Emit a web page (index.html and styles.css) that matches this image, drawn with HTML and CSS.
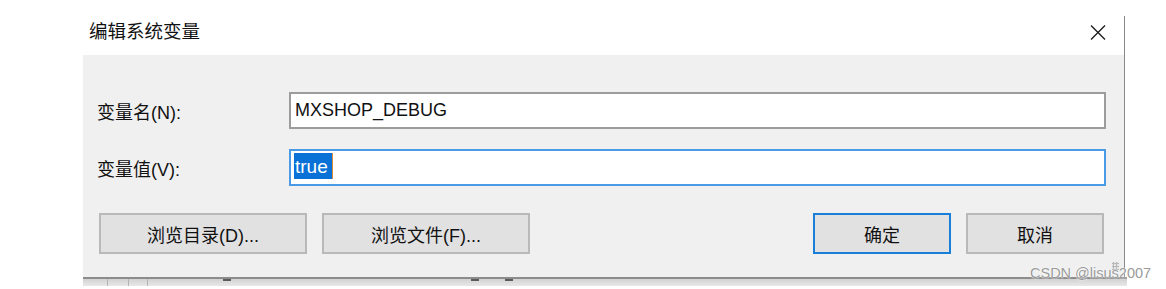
FILE: index.html
```html
<!DOCTYPE html>
<html lang="zh-CN">
<head>
    <meta charset="UTF-8">
    <title>编辑系统变量</title>
    <link rel="stylesheet" href="styles.css">
</head>
<body>
    <div class="screen">
        <!-- 对话框 -->
        <div class="dialog">
            <div class="titlebar">
                <span class="title">编辑系统变量</span>
                <span class="close-btn">
                    <svg width="16" height="15" viewBox="0 0 16 15">
                        <path d="M1 0.5 L15 14.5 M15 0.5 L1 14.5" stroke="#1a1a1a" stroke-width="1.3" fill="none"/>
                    </svg>
                </span>
            </div>

            <div class="panel">
                <div class="field-row">
                    <span class="field-label">变量名(N):</span>
                    <div class="textbox">MXSHOP_DEBUG</div>
                </div>
                <div class="field-row">
                    <span class="field-label">变量值(V):</span>
                    <div class="textbox focused"><span class="selected">true</span><span class="caret"></span></div>
                </div>

                <div class="button-row">
                    <div class="button-group">
                        <button class="btn wide">浏览目录(D)...</button>
                        <button class="btn wide">浏览文件(F)...</button>
                    </div>
                    <div class="button-group">
                        <button class="btn default">确定</button>
                        <button class="btn">取消</button>
                    </div>
                </div>
            </div>
        </div>

        <!-- 后面窗口露出的一条 -->
        <div class="backdrop-strip">
            <span class="tick" style="margin-left: 24px"></span>
            <span class="tick" style="margin-left: 20px"></span>
            <span class="tick" style="margin-left: 18px"></span>
            <span class="tick dark" style="margin-left: 75px"></span>
            <span class="tick dark" style="margin-left: 240px"></span>
            <span class="tick dark" style="margin-left: 26px"></span>
        </div>

        <div class="grip"></div>
        <div class="watermark">CSDN @lisus2007</div>
    </div>
</body>
</html>
```

FILE: styles.css
```css
* {
    margin: 0;
    padding: 0;
    box-sizing: border-box;
}

body {
    background-color: #fff;
    font-family: "Liberation Sans", "Noto Sans CJK SC", sans-serif;
    color: #111;
    overflow: hidden;
}

.screen {
    position: relative;
    width: 1166px;
    height: 289px;
    padding-top: 16px;
}

/* 对话框 */
.dialog {
    margin-left: 83px;
    width: 1042px;
    border-right: 1px solid #8a8a8a;
}

.titlebar {
    height: 39px;
    display: flex;
    justify-content: space-between;
    align-items: flex-start;
    padding: 5px 18px 0 6px;
}

.title {
    font-size: 18.5px;
    line-height: 22px;
}

.close-btn {
    display: flex;
    margin-top: 4px;
}

.panel {
    background-color: #f0f0f0;
    padding: 37px 18px 24px 14px;
    height: 222px;
}

.field-row {
    display: flex;
    align-items: center;
    margin-bottom: 20px;
}

.field-label {
    width: 192px;
    font-size: 18px;
}

.textbox {
    flex: 1;
    height: 37px;
    background-color: #fff;
    border: 2px solid #9c9c9c;
    padding-left: 4px;
    font-size: 18px;
    display: flex;
    align-items: center;
}

.textbox.focused {
    border-color: #4a9ae6;
    padding-left: 3px;
    align-items: flex-start;
    padding-top: 2px;
    font-size: 19px;
}

.selected {
    background-color: #0a72d6;
    color: #fff;
    line-height: 25px;
    padding: 1px 4px 0 1px;
}

.caret {
    width: 1px;
    height: 26px;
    background-color: #e08a3c;
}

.button-row {
    display: flex;
    justify-content: space-between;
    padding: 7px 2px 0 2px;
}

.button-group {
    display: flex;
    gap: 15px;
}

.btn {
    height: 41px;
    width: 138px;
    background-color: #e1e1e1;
    border: 2px solid #b9b9b9;
    font-family: "Liberation Sans", "Noto Sans CJK SC", sans-serif;
    font-size: 18px;
    color: #111;
}

.btn.wide {
    width: 208px;
}

.btn.default {
    border-color: #1a7fd9;
}

/* 下方背景窗口 */
.backdrop-strip {
    margin-left: 83px;
    width: 1044px;
    height: 9px;
    border-top: 2px solid #8c8c8c;
    background: linear-gradient(#d2d2d2, #e8e8e8);
    display: flex;
}

.tick {
    width: 1px;
    height: 100%;
    background-color: #b4b4b4;
}

.tick.dark {
    height: 2px;
    width: 8px;
    background-color: #5a5a5a;
}

.grip {
    position: absolute;
    left: 1112px;
    top: 262px;
    width: 7px;
    height: 8px;
    background: radial-gradient(circle, #b8b8b8 1px, transparent 1.5px) 0 0 / 3px 3px;
}

.watermark {
    position: absolute;
    left: 1030px;
    top: 265px;
    font-size: 14.5px;
    color: #9a9a9a;
    text-shadow: 0 0 2px #fff, 0 0 1px #fff;
}
```
